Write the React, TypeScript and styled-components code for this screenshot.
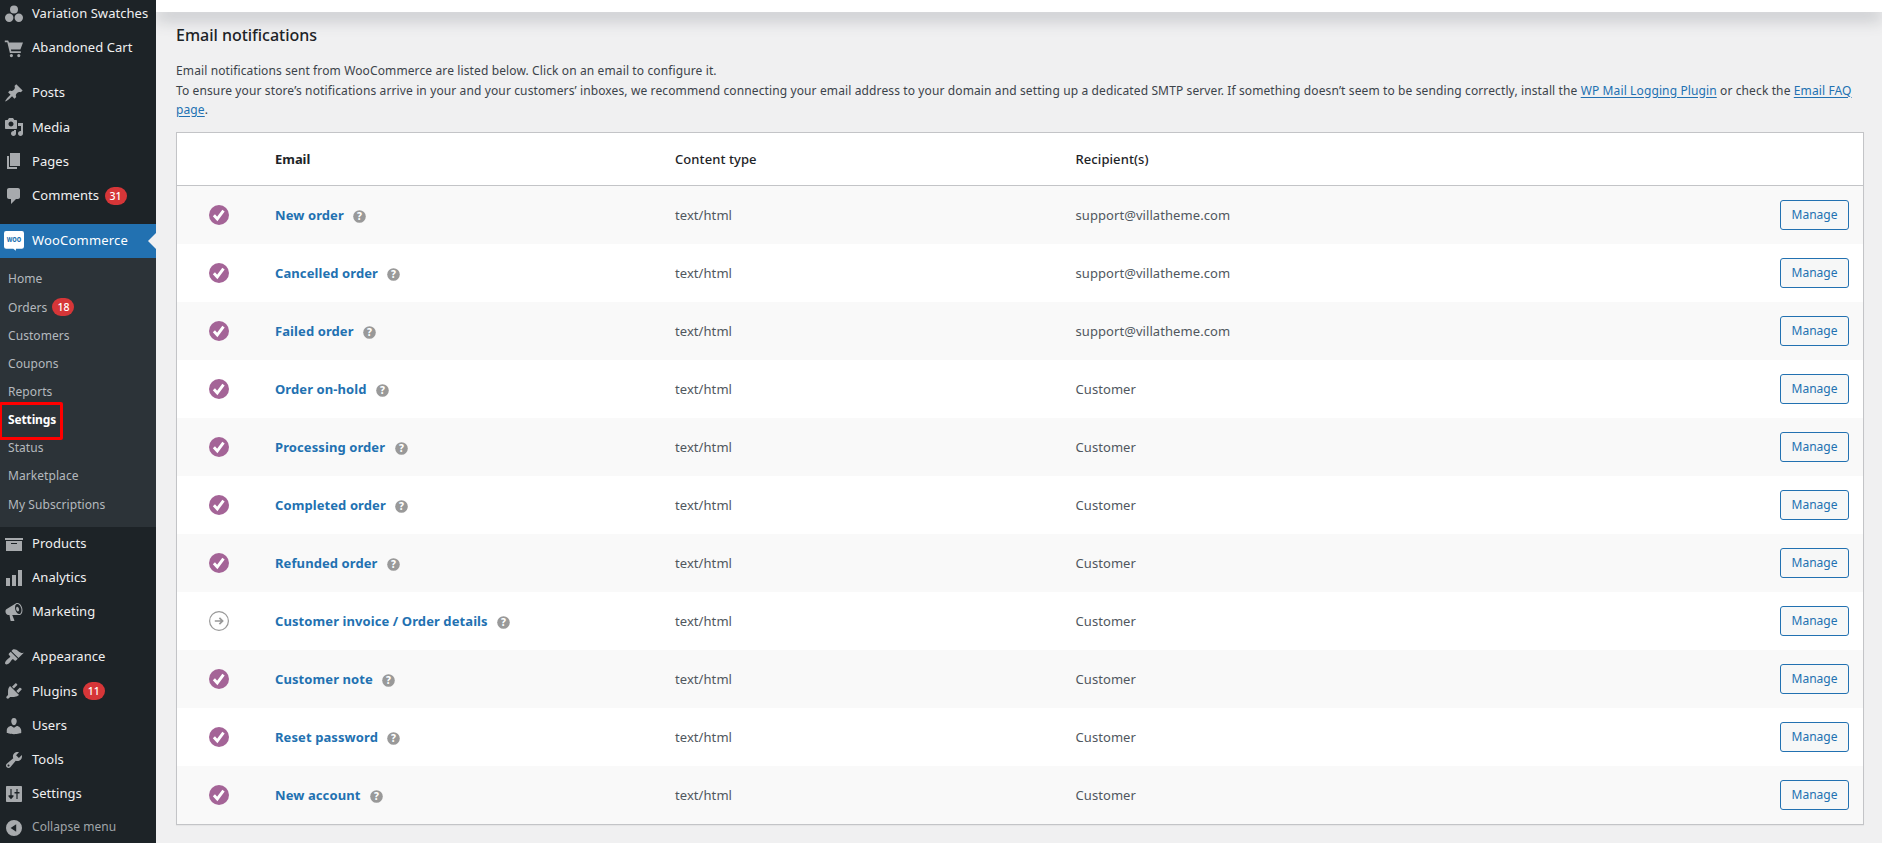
import React from "react";
import styled, { createGlobalStyle, css } from "styled-components";

const GlobalStyle = createGlobalStyle`
  * { box-sizing: border-box; }
  html, body { margin: 0; padding: 0; }
  body {
    background: #f0f0f1;
    color: #3c434a;
    font-family: "Noto Sans", "Open Sans", sans-serif;
    font-size: 12px;
    overflow: hidden;
  }
`;

const Shell = styled.div`
  display: flex;
  height: 843px;
  overflow: hidden;
`;

/* ---------- admin menu ---------- */

const Sidebar = styled.nav`
  flex: 0 0 156px;
  width: 156px;
  height: 100%;
  background: #1d2327;
  overflow: hidden;
`;

const MenuList = styled.div`
  display: flex;
  flex-direction: column;
  margin-top: -3.4px;
`;

const MenuItem = styled.a<{ $active?: boolean; $muted?: boolean }>`
  position: relative;
  display: flex;
  align-items: center;
  flex: none;
  height: 34.2px;
  padding-left: 4px;
  color: ${(p) => (p.$active ? "#fff" : p.$muted ? "#a0a5a9" : "#f0f0f1")};
  background: ${(p) => (p.$active ? "#2271b1" : "transparent")};
  font-size: ${(p) => (p.$muted ? 12 : 13)}px;
  letter-spacing: ${(p) => (p.$active ? 0.18 : 0.05)}px;
  line-height: 18px;
  white-space: nowrap;
  ${(p) =>
    p.$active &&
    css`
      &::after {
        content: "";
        position: absolute;
        right: 0;
        top: 9px;
        border: 8px solid transparent;
        border-right-color: #f0f0f1;
        border-left-width: 0;
      }
    `}
`;

const MenuLabel = styled.span`
  margin-left: 8px;
  padding-bottom: 1.5px;
`;

const MenuGap = styled.div`
  flex: none;
  height: 11px;
`;

const Badge = styled.span<{ $offset: number }>`
  display: inline-flex;
  align-items: center;
  justify-content: center;
  min-width: 22px;
  height: 18px;
  margin-left: ${(p) => p.$offset}px;
  padding: 0 5px;
  border-radius: 9px;
  background: #d63638;
  color: #fff;
  font-size: 10.5px;
  font-weight: 500;
  line-height: 18px;
  letter-spacing: 0;
`;

const Submenu = styled.div`
  flex: none;
  height: 268.6px;
  padding-top: 7px;
  background: #2c3338;
`;

const SubItem = styled.a<{ $current?: boolean }>`
  position: relative;
  display: flex;
  align-items: center;
  height: 28.15px;
  padding-left: 8px;
  color: ${(p) => (p.$current ? "#fff" : "#b4b9be")};
  font-size: 12px;
  font-weight: ${(p) => (p.$current ? 700 : 400)};
  letter-spacing: ${(p) => (p.$current ? -0.14 : 0.07)}px;
  white-space: nowrap;
`;

const Highlight = styled.span`
  position: absolute;
  left: -1px;
  top: -3.5px;
  width: 64px;
  height: 38px;
  border: 3px solid #ff0000;
  border-radius: 2px;
`;

const Glyph = styled.svg`
  display: block;
  flex: none;
  width: 20px;
  height: 20px;
  fill: #a7aaad;
`;

const paths = {
  cart: "M0.8 2.6H4.2L5 4.6H19L16.4 11.6H6.9L7.3 13.2H16.8V14.9H5.9L3.3 4.3H0.8zM7.4 16a1.6 1.6 0 1 0 0 3.2a1.6 1.6 0 1 0 0-3.2zM14.8 16a1.6 1.6 0 1 0 0 3.2a1.6 1.6 0 1 0 0-3.2z",
  swatches:
    "M10 1.4a4 4 0 1 0 0 8a4 4 0 1 0 0-8zM5.2 9.6a4.2 4.2 0 1 0 0 8.4a4.2 4.2 0 1 0 0-8.4zM14.8 9.6a4.2 4.2 0 1 0 0 8.4a4.2 4.2 0 1 0 0-8.4z",
  posts:
    "M10.44 3.02l1.82-1.82 6.36 6.35-1.83 1.82c-1.05-.68-2.48-.57-3.41.36l-.75.75c-.92.93-1.04 2.35-.35 3.41l-1.83 1.82-2.41-2.41-2.8 2.79c-.42.42-3.38 2.71-3.8 2.29s1.86-3.39 2.28-3.81l2.79-2.79L4.1 9.36l1.83-1.82c1.05.69 2.48.57 3.4-.36l.75-.75c.93-.92 1.05-2.35.36-3.41z",
  media:
    "M13 11V4c0-.55-.45-1-1-1h-1.67L9 1H5L3.67 3H2c-.55 0-1 .45-1 1v7c0 .55.45 1 1 1h10c.55 0 1-.45 1-1zM7 4.5c1.38 0 2.5 1.12 2.5 2.5S8.38 9.5 7 9.5 4.5 8.38 4.5 7 5.62 4.5 7 4.5zM14 6h5v10.5c0 1.38-1.12 2.5-2.5 2.5S14 17.88 14 16.5s1.12-2.5 2.5-2.5c.17 0 .34.02.5.05V9h-3V6zm-4 8.05V13h2v3.5c0 1.38-1.12 2.5-2.5 2.5S7 17.88 7 16.5 8.12 14 9.5 14c.17 0 .34.02.5.05z",
  pages: "M6 15V2h10v13H6zm-1 1h8v2H3V5h2v11z",
  comments: "M5 2h9c1.1 0 2 .9 2 2v7c0 1.1-.9 2-2 2h-2l-5 5v-5H5c-1.1 0-2-.9-2-2V4c0-1.1.9-2 2-2z",
  products: "M19 4v2H1V4h18zM2 7h16v10H2V7zm11 3V9H7v1h6z",
  analytics: "M18 18V2h-4v16h4zm-6 0V7H8v11h4zm-6 0v-8H2v8h4z",
  marketing:
    "M18.15 5.94c.46 1.62.38 3.22-.02 4.48-.42 1.28-1.26 2.18-2.3 2.48-.16.06-.26.06-.4.06-.06.02-.12.02-.18.02-.06.02-.14.02-.22.02h-6.8l2.22 5.5c.02.14-.06.26-.14.34-.08.1-.24.16-.34.16H6.95c-.1 0-.26-.06-.34-.16-.08-.08-.16-.2-.14-.34l-1-5.5H4.25l-.02-.02c-.5.06-1.08-.18-1.54-.62s-.88-1.08-1.06-1.88c-.24-.8-.2-1.56-.02-2.2.18-.62.58-1.08 1.06-1.3l.02-.02 9-5.4c.1-.06.18-.1.24-.16.06-.04.14-.08.24-.12.16-.08.28-.12.5-.18 1.04-.3 2.24.1 3.22.98s1.84 2.24 2.26 3.86zm-2.58 5.98h-.02c.4-.1.74-.34 1.04-.7.58-.7.86-1.76.86-3.04 0-.64-.1-1.3-.28-1.98-.34-1.36-1.02-2.5-1.78-3.24s-1.68-1.1-2.46-.88c-.82.22-1.4.96-1.7 2-.32 1.04-.28 2.36.06 3.72.38 1.36 1 2.5 1.8 3.24.78.74 1.62 1.1 2.48.88zm-2.54-7.08c.22-.04.42-.02.62.04.38.16.76.48 1.02 1s.42 1.2.42 1.78c0 .3-.04.56-.12.8-.18.48-.44.84-.86.94-.34.1-.8-.06-1.14-.4s-.64-.86-.78-1.5c-.18-.62-.12-1.24.02-1.72s.48-.84.82-.94z",
  appearance:
    "M14.48 11.06L7.41 3.99l1.5-1.5c.5-.56 2.3-.47 3.51.32 1.21.8 1.43 1.28 2.91 2.1 1.18.64 2.45 1.26 4.45.85zm-.71.71L6.7 4.7 4.93 6.47c-.39.39-.39 1.02 0 1.41l1.06 1.06c.39.39.39 1.03 0 1.42-.6.6-1.43 1.11-2.21 1.69-.35.26-.7.53-1.01.84C1.43 14.23.4 16.08 1.4 17.07c.99 1 2.84-.03 4.18-1.36.31-.31.58-.66.85-1.02.57-.78 1.08-1.61 1.69-2.21.39-.39 1.02-.39 1.41 0l1.06 1.06c.39.39 1.02.39 1.41 0z",
  plugins:
    "M13.11 4.36L9.87 7.6 8 5.73l3.24-3.24c.35-.34 1.05-.2 1.56.32.52.51.66 1.21.31 1.55zm-8 1.77l.91-1.12 9.01 9.01-1.19.84c-.71.71-2.63 1.16-3.82 1.16H6.14L4.9 17.26c-.59.59-1.54.59-2.12 0-.59-.58-.59-1.53 0-2.12l1.24-1.24v-3.88c0-1.13.4-3.19 1.09-3.89zm7.26 3.97l3.24-3.24c.34-.35 1.04-.21 1.55.31.52.51.66 1.21.31 1.55l-3.24 3.25z",
  users:
    "M10 9.25c-2.27 0-2.73-3.44-2.73-3.44C7 4.02 7.82 2 9.97 2c2.16 0 2.98 2.02 2.71 3.81 0 0-.41 3.44-2.68 3.44zm0 2.57L12.72 10c2.39 0 4.52 2.33 4.52 4.53v2.49s-3.65 1.13-7.24 1.13c-3.65 0-7.24-1.13-7.24-1.13v-2.49c0-2.25 1.94-4.48 4.47-4.48z",
  tools:
    "M16.68 9.77c-1.34 1.34-3.3 1.67-4.95.99l-5.41 6.52c-.99.99-2.59.99-3.58 0s-.99-2.59 0-3.57l6.52-5.42c-.68-1.65-.35-3.61.99-4.95 1.28-1.28 3.12-1.62 4.72-1.06l-2.89 2.89 2.82 2.82 2.86-2.87c.53 1.58.18 3.39-1.08 4.65zM3.81 16.21c.4.39 1.04.39 1.43 0 .4-.4.4-1.04 0-1.43-.39-.4-1.03-.4-1.43 0-.39.39-.39 1.03 0 1.43z",
  settings:
    "M18 17V3c0-.55-.45-1-1-1H3c-.55 0-1 .45-1 1v14c0 .55.45 1 1 1h14c.55 0 1-.45 1-1zM6.4 5h1.2v6.2h1.9v1.4L7 15.2 4.5 12.6v-1.4h1.9zM12.4 15V9.4h-1.9V8h1.9V5h1.2v3h1.9v1.4h-1.9V15z",
  collapse: "M10 2a8 8 0 1 0 0 16a8 8 0 1 0 0-16zM12.2 6.2v7.6L6.6 10z",
};

type IconName = keyof typeof paths;

const MenuIcon = ({ name }: { name: IconName }) => (
  <Glyph viewBox="0 0 20 20" aria-hidden>
    <path fillRule="evenodd" d={paths[name]} />
  </Glyph>
);

const WooMark = styled.text`
  fill: #2271b1;
  font-family: "Noto Sans", sans-serif;
  font-size: 7px;
  font-weight: 800;
  letter-spacing: 0;
`;

const WooIcon = () => (
  <Glyph viewBox="0 0 20 20" aria-hidden>
    <path
      fill="#fff"
      d="M2.4 0h15.2A2.3 2.3 0 0 1 20 2.3v13.2a2.3 2.3 0 0 1-2.4 2.3h-5.7v2l-2.6-2H2.4A2.3 2.3 0 0 1 0 15.5V2.3A2.3 2.3 0 0 1 2.4 0z"
    />
    <WooMark x="2.8" y="11.2" textLength="14.4" lengthAdjust="spacingAndGlyphs">
      WOO
    </WooMark>
  </Glyph>
);

type Entry = { icon: IconName; label: string; badge?: string; offset?: number };

const topGroup: Entry[] = [
  { icon: "swatches", label: "Variation Swatches" },
  { icon: "cart", label: "Abandoned Cart" },
];
const contentGroup: Entry[] = [
  { icon: "posts", label: "Posts" },
  { icon: "media", label: "Media" },
  { icon: "pages", label: "Pages" },
  { icon: "comments", label: "Comments", badge: "31", offset: 5.5 },
];
const shopGroup: Entry[] = [
  { icon: "products", label: "Products" },
  { icon: "analytics", label: "Analytics" },
  { icon: "marketing", label: "Marketing" },
];
const siteGroup: Entry[] = [
  { icon: "appearance", label: "Appearance" },
  { icon: "plugins", label: "Plugins", badge: "11", offset: 5.5 },
  { icon: "users", label: "Users" },
  { icon: "tools", label: "Tools" },
  { icon: "settings", label: "Settings" },
];
const submenu: { label: string; badge?: string; current?: boolean }[] = [
  { label: "Home" },
  { label: "Orders", badge: "18" },
  { label: "Customers" },
  { label: "Coupons" },
  { label: "Reports" },
  { label: "Settings", current: true },
  { label: "Status" },
  { label: "Marketplace" },
  { label: "My Subscriptions" },
];

const Group = ({ entries }: { entries: Entry[] }) => (
  <>
    {entries.map((e) => (
      <MenuItem key={e.label}>
        <MenuIcon name={e.icon} />
        <MenuLabel>{e.label}</MenuLabel>
        {e.badge && <Badge $offset={e.offset ?? 5}>{e.badge}</Badge>}
      </MenuItem>
    ))}
  </>
);

/* ---------- page ---------- */

const Page = styled.main`
  flex: 1;
  min-width: 0;
  display: flex;
  flex-direction: column;
`;

const TopBar = styled.header`
  flex: none;
  height: 12px;
  background: #fff;
  box-shadow: 0 8px 16px 0 rgba(85, 93, 102, 0.3);
  clip-path: inset(0 0 -40px 0);
`;

const Content = styled.section`
  padding: 0 18px 0 20px;
`;

const Heading = styled.h2`
  margin: 11px 0 0;
  color: #1d2327;
  font-size: 16px;
  font-weight: 500;
  letter-spacing: -0.02px;
  line-height: 24px;
`;

const Intro = styled.p`
  margin: 14px 0 0;
  font-size: 12px;
  line-height: 19.5px;
  letter-spacing: 0.12px;
`;

const Link = styled.a`
  color: #2271b1;
  text-decoration: underline;
  text-underline-offset: 2px;
`;

const Table = styled.div`
  margin-top: 12.5px;
  border: 1px solid #c3c4c7;
  background: #fff;
  box-shadow: 0 1px 1px rgba(0, 0, 0, 0.04);
`;

const Row = styled.div<{ $striped?: boolean }>`
  display: grid;
  grid-template-columns: 84px 400px 400.5px 1fr auto;
  align-items: center;
  height: 58px;
  padding-right: 14px;
  background: ${(p) => (p.$striped ? "#f9f9f9" : "#fff")};
`;

const HeadRow = styled(Row)`
  height: 53px;
  border-bottom: 1px solid #c3c4c7;
`;

const HeadCell = styled.div<{ $strong?: boolean }>`
  padding-left: 14px;
  color: #1d2327;
  font-size: 13px;
  font-weight: ${(p) => (p.$strong ? 700 : 550)};
  letter-spacing: ${(p) => (p.$strong ? -0.04 : 0.08)}px;
`;

const StatusCell = styled.div`
  display: flex;
  justify-content: center;
`;

const NameCell = styled.div`
  display: flex;
  align-items: center;
  padding-left: 14px;
`;

const EmailLink = styled.a`
  color: #2271b1;
  font-size: 13px;
  font-weight: 700;
  letter-spacing: 0.09px;
`;

const Cell = styled.div`
  padding-left: 14px;
  color: #50575e;
  font-size: 13px;
  letter-spacing: 0.07px;
`;

const ManageButton = styled.button`
  width: 69px;
  height: 30px;
  padding: 0;
  border: 1px solid #2271b1;
  border-radius: 3px;
  background: #f6f7f7;
  color: #2271b1;
  font-family: inherit;
  font-size: 12px;
  line-height: 28px;
`;

const StatusSvg = styled.svg`
  display: block;
  width: 20px;
  height: 20px;
`;

const HelpSvg = styled.svg`
  display: block;
  width: 13px;
  height: 13px;
  margin: 3px 0 0 9.5px;
`;

const HelpMark = styled.text`
  fill: #fff;
  font-family: "Noto Sans", sans-serif;
  font-size: 10px;
  font-weight: 800;
  text-anchor: middle;
`;

const Enabled = () => (
  <StatusSvg viewBox="0 0 20 20" aria-label="Enabled">
    <circle cx="10" cy="10" r="10" fill="#a46497" />
    <path d="M4.9 10.2l3.4 3.7 6.2-8.2" fill="none" stroke="#fff" strokeWidth="2.9" />
  </StatusSvg>
);

const Manual = () => (
  <StatusSvg viewBox="0 0 20 20" aria-label="Manually sent">
    <circle cx="10" cy="10" r="9.4" fill="none" stroke="#999" strokeWidth="1.2" />
    <path d="M5.8 10h7.6M10.4 6.8l3.2 3.2-3.2 3.2" fill="none" stroke="#999" strokeWidth="1.7" />
  </StatusSvg>
);

const Help = () => (
  <HelpSvg viewBox="0 0 13 13" aria-hidden>
    <circle cx="6.5" cy="6.5" r="6.3" fill="#999" />
    <HelpMark x="6.5" y="10.1">?</HelpMark>
  </HelpSvg>
);

const emails: { name: string; to: string; manual?: boolean }[] = [
  { name: "New order", to: "support@villatheme.com" },
  { name: "Cancelled order", to: "support@villatheme.com" },
  { name: "Failed order", to: "support@villatheme.com" },
  { name: "Order on-hold", to: "Customer" },
  { name: "Processing order", to: "Customer" },
  { name: "Completed order", to: "Customer" },
  { name: "Refunded order", to: "Customer" },
  { name: "Customer invoice / Order details", to: "Customer", manual: true },
  { name: "Customer note", to: "Customer" },
  { name: "Reset password", to: "Customer" },
  { name: "New account", to: "Customer" },
];

export default function App() {
  return (
    <>
      <GlobalStyle />
      <Shell>
        <Sidebar>
          <MenuList>
            <Group entries={topGroup} />
            <MenuGap />
            <Group entries={contentGroup} />
            <MenuGap />
            <MenuItem $active>
              <WooIcon />
              <MenuLabel>WooCommerce</MenuLabel>
            </MenuItem>
            <Submenu>
              {submenu.map((s) => (
                <SubItem key={s.label} $current={s.current}>
                  {s.current && <Highlight />}
                  {s.label}
                  {s.badge && <Badge $offset={5}>{s.badge}</Badge>}
                </SubItem>
              ))}
            </Submenu>
            <Group entries={shopGroup} />
            <MenuGap />
            <Group entries={siteGroup} />
            <MenuItem $muted>
              <MenuIcon name="collapse" />
              <MenuLabel>Collapse menu</MenuLabel>
            </MenuItem>
          </MenuList>
        </Sidebar>
        <Page>
          <TopBar />
          <Content>
            <Heading>Email notifications</Heading>
            <Intro>
              Email notifications sent from WooCommerce are listed below. Click on an email to configure it.
              <br />
              To ensure your store’s notifications arrive in your and your customers’ inboxes, we recommend
              connecting your email address to your domain and setting up a dedicated SMTP server. If something
              doesn’t seem to be sending correctly, install the <Link>WP Mail Logging Plugin</Link> or check the{" "}
              <Link>Email FAQ page</Link>.
            </Intro>
            <Table>
              <HeadRow>
                <span />
                <HeadCell $strong>Email</HeadCell>
                <HeadCell>Content type</HeadCell>
                <HeadCell>Recipient(s)</HeadCell>
              </HeadRow>
              {emails.map((e, i) => (
                <Row key={e.name} $striped={i % 2 === 0}>
                  <StatusCell>{e.manual ? <Manual /> : <Enabled />}</StatusCell>
                  <NameCell>
                    <EmailLink>{e.name}</EmailLink>
                    <Help />
                  </NameCell>
                  <Cell>text/html</Cell>
                  <Cell>{e.to}</Cell>
                  <ManageButton>Manage</ManageButton>
                </Row>
              ))}
            </Table>
          </Content>
        </Page>
      </Shell>
    </>
  );
}
